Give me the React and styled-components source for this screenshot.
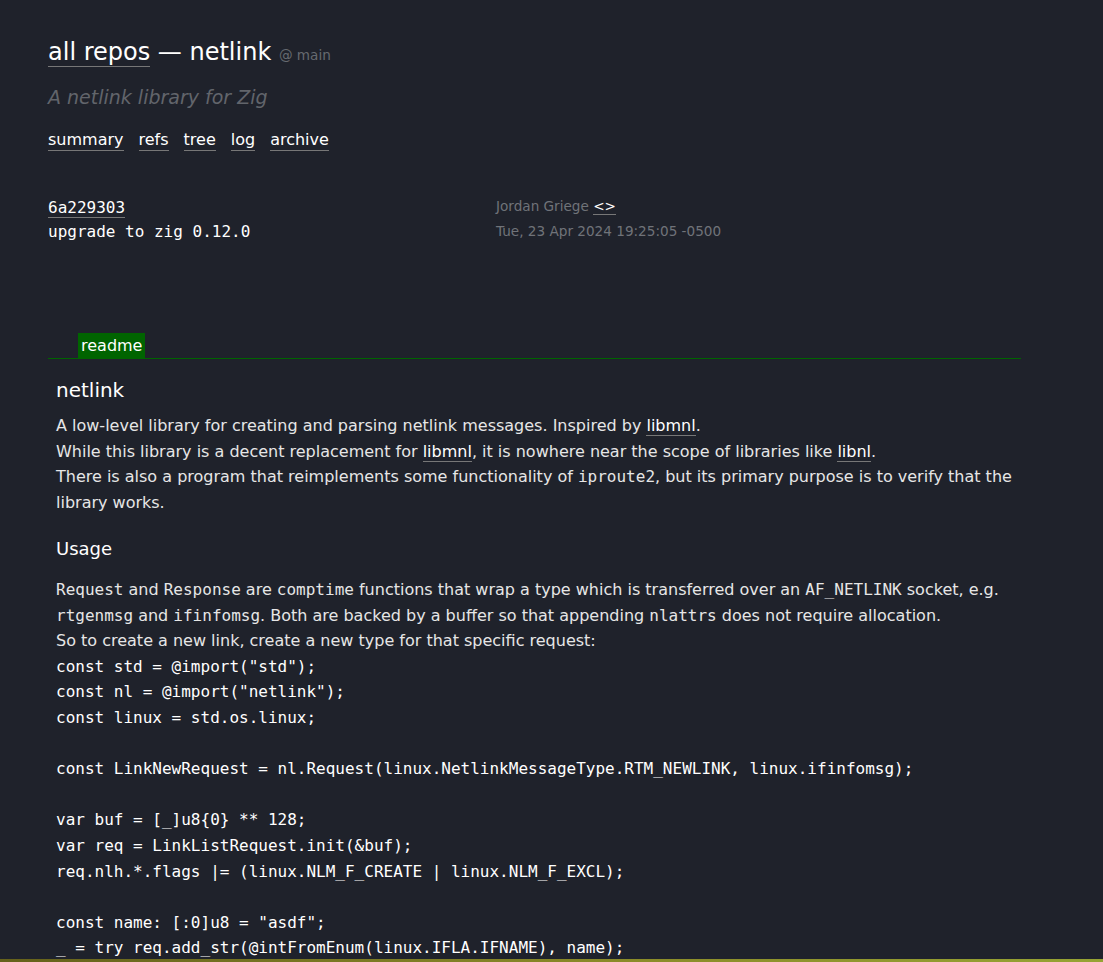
import React from "react";
import styled, { createGlobalStyle } from "styled-components";

const GlobalStyle = createGlobalStyle`
  html, body {
    background: #1f222b;
  }
  body {
    margin: 8px;
    color: #e6e6e6;
    font-family: "DejaVu Sans", "Liberation Sans", sans-serif;
    font-size: 16px;
  }
`;

const Page = styled.div`
  padding: 30px 40px 0;
  max-width: 973px;
`;

const Link = styled.a`
  color: #ffffff;
  text-decoration: none;
  border-bottom: 1px solid #777;
  cursor: pointer;
`;

const Title = styled.h1`
  margin: 0;
  font-size: 24px;
  font-weight: normal;
  line-height: 28px;
  color: #ffffff;
`;

const Branch = styled.span`
  font-size: 13.6px;
  color: #666a70;
`;

const Subtitle = styled.h2`
  margin: 16px 0 0;
  font-size: 19px;
  font-style: italic;
  font-weight: normal;
  line-height: 24px;
  color: #62656b;
`;

const Nav = styled.nav`
  display: flex;
  gap: 15px;
  margin-top: 21px;
  line-height: 20px;
`;

const Commit = styled.div`
  display: grid;
  grid-template-columns: 448px 1fr;
  margin-top: 45px;
  line-height: 24px;
`;

const Mono = styled.div`
  font-family: "DejaVu Sans Mono", "Liberation Mono", monospace;
  font-size: 16px;
  color: #ffffff;
`;

const Meta = styled.div`
  margin-top: -2px;
  font-size: 13.6px;
  line-height: 25px;
  color: #707379;
`;

const Tabs = styled.div`
  display: flex;
  margin-top: 89px;
  padding-left: 30px;
  border-bottom: 1px solid #006400;
`;

const Tab = styled.span`
  background: ${(p) => (p.active ? "#006400" : "transparent")};
  color: #ffffff;
  padding: 0 3px;
  line-height: 25px;
`;

const Readme = styled.article`
  padding: 0 8px;
`;

const H1 = styled.h1`
  margin: 15px 0 7px;
  font-size: 20px;
  font-weight: normal;
  line-height: 32px;
  color: #ffffff;
`;

const H2 = styled.h2`
  margin: 20px 0 12.8px;
  font-size: 18px;
  font-weight: normal;
  line-height: 28.8px;
  color: #ffffff;
`;

const P = styled.p`
  margin: 0;
  line-height: 25.6px;
`;

const Code = styled.code`
  font-family: "DejaVu Sans Mono", "Liberation Mono", monospace;
  font-size: 16px;
  line-height: 1;
`;

const Pre = styled.pre`
  margin: 0;
  font-family: "DejaVu Sans Mono", "Liberation Mono", monospace;
  font-size: 16px;
  line-height: 25.6px;
  color: #ffffff;
`;

const BottomStrip = styled.div`
  position: fixed;
  left: 0;
  right: 0;
  bottom: 0;
  height: 3px;
  background: linear-gradient(90deg, #65611b, #8a8a28 55%, #96a334);
`;

const code = `const std = @import("std");
const nl = @import("netlink");
const linux = std.os.linux;

const LinkNewRequest = nl.Request(linux.NetlinkMessageType.RTM_NEWLINK, linux.ifinfomsg);

var buf = [_]u8{0} ** 128;
var req = LinkListRequest.init(&buf);
req.nlh.*.flags |= (linux.NLM_F_CREATE | linux.NLM_F_EXCL);

const name: [:0]u8 = "asdf";
_ = try req.add_str(@intFromEnum(linux.IFLA.IFNAME), name);
_ = try req.add_str(@intFromEnum(linux.IFLA.INFO_KIND), "dummy");

const res = try req.send(fd);`;

export default function App() {
  return (
    <>
      <GlobalStyle />
      <Page>
        <Title>
          <Link>all repos</Link> — netlink <Branch>@ main</Branch>
        </Title>
        <Subtitle>A netlink library for Zig</Subtitle>
        <Nav>
          {["summary", "refs", "tree", "log", "archive"].map((n) => (
            <Link key={n}>{n}</Link>
          ))}
        </Nav>

        <Commit>
          <Mono>
            <Link>6a229303</Link>
            <div>upgrade to zig 0.12.0</div>
          </Mono>
          <Meta>
            <div>
              Jordan Griege <Link>&lt;&gt;</Link>
            </div>
            <div>Tue, 23 Apr 2024 19:25:05 -0500</div>
          </Meta>
        </Commit>

        <Tabs>
          <Tab active>readme</Tab>
        </Tabs>

        <Readme>
          <H1>netlink</H1>
          <P>
            A low-level library for creating and parsing netlink messages. Inspired by{" "}
            <Link>libmnl</Link>.
            <br />
            While this library is a decent replacement for <Link>libmnl</Link>, it is nowhere
            near the scope of libraries like <Link>libnl</Link>.
            <br />
            There is also a program that reimplements some functionality of{" "}
            <Code>iproute2</Code>, but its primary purpose is to verify that the library works.
          </P>
          <H2>Usage</H2>
          <P>
            <Code>Request</Code> and <Code>Response</Code> are <Code>comptime</Code> functions
            that wrap a type which is transferred over an <Code>AF_NETLINK</Code> socket, e.g.{" "}
            <Code>rtgenmsg</Code> and <Code>ifinfomsg</Code>. Both are backed by a buffer so that
            appending <Code>nlattrs</Code> does not require allocation.
            <br />
            So to create a new link, create a new type for that specific request:
          </P>
          <Pre>{code}</Pre>
        </Readme>
      </Page>
      <BottomStrip />
    </>
  );
}
